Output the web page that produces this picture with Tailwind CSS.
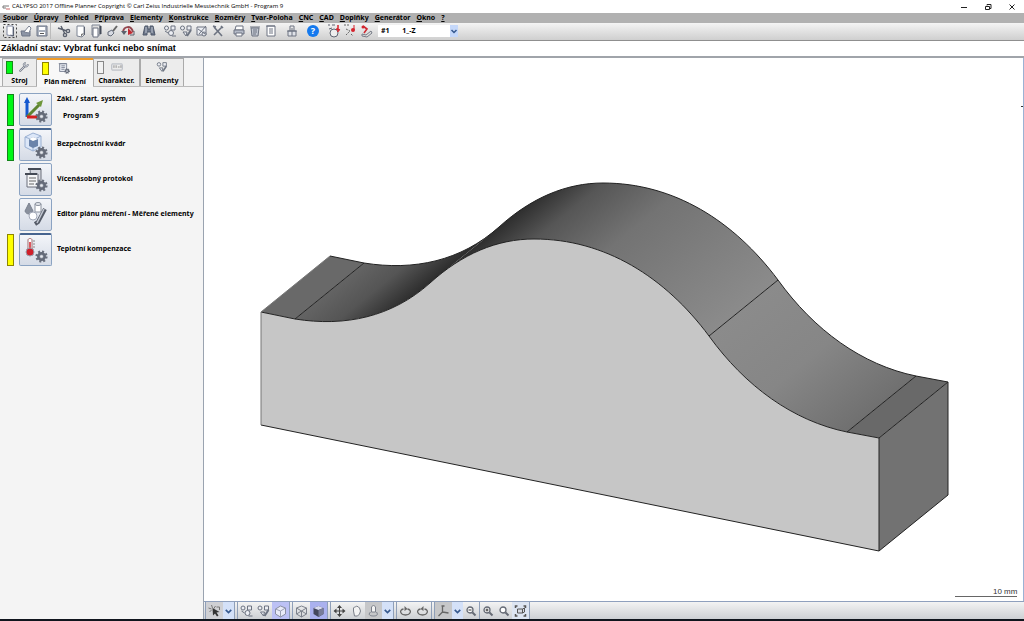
<!DOCTYPE html>
<html lang="cs">
<head>
    <meta charset="UTF-8">
    <title>CALYPSO 2017 Offline Planner</title>
    <script src="https://cdn.jsdelivr.net/npm/@tailwindcss/browser@4"></script>
</head>
<body class="bg-white">
    <!-- shared icons -->
    <svg class="hidden">
        <symbol id="gear" viewBox="0 0 16 16">
            <circle cx="8" cy="8" r="6" fill="none" stroke="#6a707d" stroke-width="3" stroke-dasharray="2.4 2.3"/>
            <circle cx="8" cy="8" r="4" fill="#9aa0ac" stroke="#646a78" stroke-width="3"/>
            <circle cx="8" cy="8" r="1.6" fill="#e8eaf0"/>
        </symbol>
        <symbol id="page" viewBox="0 0 16 16"><path d="M5 3h7v9l-2 2-5-1z" fill="#fff" stroke="#7d8493"/><path d="M12 10l-3 4v-3z" fill="#777"/><path d="M12.500 4v8" stroke="#5b6170"/></symbol>
        <symbol id="pages" viewBox="0 0 16 16"><path d="M4 2h8v10H4z" fill="#ddd" stroke="#7d8493"/><path d="M5 5h5v9H5z" fill="#fff" stroke="#6b7180"/><path d="M12.500 3v8" stroke="#444b59" stroke-width="2"/></symbol>
        <symbol id="new" viewBox="0 0 16 16"><path d="M1.500 1.500h13v13h-13z" fill="none" stroke="#444" stroke-dasharray="2 2"/><path d="M5 3h6v10l-6-1z" fill="#fff" stroke="#8188a0"/><path d="M11.500 4v9l-3-1" fill="none" stroke="#59606f"/></symbol>
        <symbol id="open" viewBox="0 0 16 16"><path d="M3 8h9v5H4z" fill="#8d95a6" stroke="#6c7486"/><path d="M6 9l5-6 2 2-2 5z" fill="#fff" stroke="#7a8192"/></symbol>
        <symbol id="save" viewBox="0 0 16 16"><path d="M3 3h10v10H3z" fill="#a9b0bd" stroke="#6c7486"/><path d="M5 4h6v3H5zM5 9h6v3H5z" fill="#fff"/><path d="M6 10.500h4" stroke="#555"/></symbol>
        <symbol id="cut" viewBox="0 0 16 16" fill="none" stroke="#5a606d" stroke-width="1.400"><path d="M2 5l9 3M5 3l4 8"/><circle cx="12" cy="8" r="1.600"/><circle cx="9" cy="12" r="1.600"/></symbol>
        <symbol id="brush" viewBox="0 0 16 16"><path d="M13 3L9 8" stroke="#666" stroke-width="2"/><path d="M4 9l4-2 2 3-3 3-3-1z" fill="#d8dbe3" stroke="#666d7b"/></symbol>
        <symbol id="undo" viewBox="0 0 16 16"><path d="M3 9c1-6 8-7 10 0" fill="none" stroke="#93474f" stroke-width="2"/><path d="M1 8h6l-3 4z" fill="#5c616c"/><path d="M8 5v7l5-2z" fill="#c22a32"/><path d="M10 12h4V8" fill="none" stroke="#5c616c"/></symbol>
        <symbol id="find" viewBox="0 0 16 16"><path d="M4 3h3v3h2V3h3l2 9h-4V9H6v3H2z" fill="#6c7689" stroke="#4f586a"/><path d="M5 4v6M11 4v6" stroke="#c1c7d3"/></symbol>
        <symbol id="feat1" viewBox="0 0 16 16" fill="#eceef3" stroke="#6c7381"><circle cx="4.500" cy="5" r="2"/><path d="M9 3h4v4H9z"/><circle cx="9" cy="10" r="2.500"/><path d="M10 13h4M3 8l3 2" fill="none"/></symbol>
        <symbol id="feat2" viewBox="0 0 16 16" fill="#eceef3" stroke="#6c7381"><circle cx="4.500" cy="5" r="2"/><path d="M9 3h4v4H9zM5 9h4l-1 4z"/><path d="M13 7l-4 6" stroke-width="2"/></symbol>
        <symbol id="feat3" viewBox="0 0 16 16" fill="#eceef3" stroke="#6c7381"><path d="M3 4h9v8H3z"/><circle cx="10" cy="11" r="2"/><path d="M4 6l7 5M12 3l-7 8" fill="none"/></symbol>
        <symbol id="tools" viewBox="0 0 16 16" fill="none" stroke="#6c7381" stroke-width="1.600"><path d="M4 4l8 9M12 4l-8 8M3 3l3 1M11 3l2 2"/></symbol>
        <symbol id="print" viewBox="0 0 16 16" stroke="#6c7381"><path d="M5 3h7v4H4z" fill="#fff"/><path d="M3 7h10v4H3z" fill="#b4bac7"/><path d="M5 10h6v3H5z" fill="#fff"/></symbol>
        <symbol id="trash" viewBox="0 0 16 16" stroke="#6c7381"><path d="M4 5h8l-1 8H5z" fill="#c3c8d2"/><path d="M3 4h10M6 7h4M6 9h4M6 11h3" fill="none"/></symbol>
        <symbol id="list" viewBox="0 0 16 16" stroke="#6c7381"><path d="M4 3h8v10H4z" fill="#fff"/><path d="M3 3h9M6 6h4M6 8h4M6 10h4" fill="none"/></symbol>
        <symbol id="lock" viewBox="0 0 16 16" stroke="#6c7381"><path d="M4 8h8v5H4z" fill="#dfe2e8"/><path d="M6 8V3h4v5M8 5v8M3 8h10" fill="none"/></symbol>
        <symbol id="hand" viewBox="0 0 16 16"><path d="M5 8V5l1-1 1 0 1-1 2 1 1 1 1 3-1 3-2 2H6z" fill="#f3f3f3" stroke="#7a7f89"/></symbol>
        <symbol id="turn" viewBox="0 0 16 16"><path d="M6 9V4l2-2 2 2v5z" fill="#f3f3f3" stroke="#7a7f89"/><path d="M5 9c-3 3 0 4 3 4s5-1 3-4" fill="none" stroke="#7a7f89"/></symbol>
        <symbol id="probe" viewBox="0 0 16 16" fill="none" stroke="#5f6572"><path d="M2 2h2M6 2h3M3 6l3-1"/><circle cx="8" cy="10" r="4" fill="#eee"/><path d="M12 2v7M10 6l4 1" stroke="#d5232d" stroke-width="1.500"/></symbol>
        <symbol id="probe2" viewBox="0 0 16 16" fill="none" stroke="#666"><path d="M2 2h2M5 2h2M4 6l4 2M4 12l4-4M9 11l2 2" stroke-dasharray="2 1"/><circle cx="11" cy="7" r="2" fill="#d5232d" stroke="none"/><path d="M12 2v5" stroke="#d5232d"/></symbol>
        <symbol id="probe3" viewBox="0 0 16 16"><path d="M5 3l4 3-3 4" fill="none" stroke="#cf2932" stroke-width="1.600"/><circle cx="5" cy="4" r="1.500" fill="#d5232d"/><path d="M4 11l4 1 5-4 1 2-5 4-5-1z" fill="#ddd" stroke="#777c87"/></symbol>
        <symbol id="cube" viewBox="0 0 16 16" stroke-linejoin="round"><path d="M3 6l5-3 5 2v6l-5 3-5-3z" fill="#e9ebf8" stroke="#8a8fa3"/><path d="M3 6l5 2 5-3M8 8v6" fill="none" stroke="#9a9fb3"/></symbol>
        <symbol id="wire" viewBox="0 0 16 16" fill="none" stroke="#7d828c" stroke-linejoin="round"><path d="M3 5l5-2 5 2v6l-5 3-5-3zM3 5l5 3 5-3M8 8v6M3 11l5-3 5 3"/></symbol>
        <symbol id="solid" viewBox="0 0 16 16"><path d="M3 5l5-2 5 2v6l-5 3-5-3z" fill="#43475d"/><path d="M3 5l5-2 5 2-5 2z" fill="#d9dcf0"/><path d="M8 7l5-2v6l-5 3z" fill="#777c99"/></symbol>
        <symbol id="move" viewBox="0 0 16 16"><path d="M8 4v8M4 8h8" stroke="#444"/><path d="M8 2l2.500 3h-5zM8 14l2.500-3h-5zM2 8l3-2.500v5zM14 8l-3-2.500v5z" fill="#444"/></symbol>
        <symbol id="rotate" viewBox="0 0 16 16"><path d="M6 6c-5 1-3 6 2 6s7-5 2-6" fill="none" stroke="#666" stroke-width="1.300"/><path d="M7 3l3 3-3 2z" fill="#666"/></symbol>
        <symbol id="axes" viewBox="0 0 16 16" fill="none" stroke="#666" stroke-width="1.300"><path d="M7 3v6l-4 4M7 9l6 1M6 3h3"/></symbol>
        <symbol id="zoom" viewBox="0 0 16 16"><circle cx="7" cy="7" r="3" fill="#fff" stroke="#666b75" stroke-width="1.300"/><path d="M9.500 9.500l3 3" stroke="#666b75" stroke-width="2"/></symbol>
        <symbol id="fit" viewBox="0 0 16 16" fill="none" stroke="#555"><path d="M3 5V3h2M11 3h2v2M13 11v2h-2M5 13H3v-2" stroke-width="1.500"/><path d="M5 6h5v4H5zM10 6l2-1v4l-2 1" fill="#d6dae3"/></symbol>
        <symbol id="arrow" viewBox="0 0 16 16"><path d="M6 5l7 4-3 .5 2 3-1.500 1-2-3-2 2z" fill="#333"/><path d="M2 5l3 1M3 9l2-2M5 2l1 3M9 3l-2 3M10 4h3v3" fill="none" stroke="#777"/></symbol>
        <symbol id="down" viewBox="0 0 10 10"><path d="M2.500 4L5 6.500 7.500 4" fill="none" stroke="#36598f" stroke-width="1.500"/></symbol>
        <symbol id="wrench" viewBox="0 0 16 16"><path d="M3 13l6-6" stroke="#7a808c" stroke-width="3" stroke-linecap="round"/><path d="M3 13l6-6" stroke="#e5e7ec" stroke-linecap="round"/><path d="M13 4l-2 2-2-1 1-3c-3 0-4 3-2 5s6 1 6-2z" fill="#c9cdd6" stroke="#7a808c"/></symbol>
        <symbol id="plan" viewBox="0 0 16 16"><path d="M3 3h8v9H3z" fill="#e6e9f0" stroke="#7a8294"/><path d="M2 3h9M5 5.500h4M5 7.500h4M5 9.500h3" stroke="#7a8294"/><use href="#gear" x="8" y="8" width="7" height="7"/></symbol>
        <symbol id="ruler" viewBox="0 0 16 16"><path d="M2 4.500h12M2 11.500h12M2 5v6M14 5v6" stroke="#aaafb9"/><path d="M4.500 6v3M7 6v3M9 8h2M12.500 6v3" stroke="#888" fill="none"/></symbol>
    </svg>

    <div class="flex h-screen flex-col overflow-hidden font-['Noto_Sans',sans-serif] text-[7px] font-bold text-black">
        <!-- title bar -->
        <header class="flex h-[13px] shrink-0 items-center pr-2 pl-[2px] font-['Open_Sans',sans-serif] text-[6px] font-normal">
            <svg class="mr-[2px] h-2 w-2" viewBox="0 0 8 8" fill="none"><path d="M1 3h6M1 3v2h3" stroke="#777"/><path d="M4 6h4" stroke="#c66"/></svg>
            <h1>CALYPSO 2017 Offline Planner Copyright © Carl Zeiss Industrielle Messtechnik GmbH - Program 9</h1>
            <div class="ml-auto flex items-center gap-4">
                <button aria-label="Minimalizovat"><svg class="h-2 w-2" viewBox="0 0 8 8"><path d="M1 4.500h6" stroke="#222"/></svg></button>
                <button aria-label="Obnovit"><svg class="h-2 w-2" viewBox="0 0 8 8" fill="none" stroke="#222"><path d="M1.500 3.500h4v3h-4zM3 2.500v-1h4v4H6"/></svg></button>
                <button aria-label="Zavřít"><svg class="h-2 w-2" viewBox="0 0 8 8"><path d="M1.500 1.500l5 5M6.500 1.500l-5 5" stroke="#222"/></svg></button>
            </div>
        </header>

        <nav class="flex h-[10px] shrink-0 items-center gap-[6px] bg-[#b1b1b1] pl-[3px]">
            <button><u>S</u>oubor</button>
            <button><u>Ú</u>pravy</button>
            <button><u>P</u>ohled</button>
            <button>P<u>ř</u>íprava</button>
            <button><u>E</u>lementy</button>
            <button><u>K</u>onstrukce</button>
            <button><u>R</u>ozměry</button>
            <button><u>T</u>var-Poloha</button>
            <button><u>C</u>NC</button>
            <button><u>C</u>AD</button>
            <button><u>D</u>oplňky</button>
            <button><u>G</u>enerátor</button>
            <button><u>O</u>kno</button>
            <button><u>?</u></button>
        </nav>

        <!-- main toolbar -->
        <div class="flex h-[18px] shrink-0 items-start gap-[5px] border-b border-[#8f8f8f] bg-linear-to-b from-[#f4f4f4] to-[#cfcfcf] pl-[2px]">
            <div class="flex border-r border-[#bbb]">
                <button aria-label="Nový"><svg class="size-4"><use href="#new"/></svg></button>
                <button aria-label="Otevřít"><svg class="size-4"><use href="#open"/></svg></button>
                <button aria-label="Uložit"><svg class="size-4"><use href="#save"/></svg></button>
            </div>
            <div class="flex">
                <button aria-label="Vyjmout"><svg class="size-4"><use href="#cut"/></svg></button>
                <button aria-label="Kopírovat"><svg class="size-4"><use href="#page"/></svg></button>
                <button aria-label="Vložit"><svg class="size-4"><use href="#pages"/></svg></button>
                <button aria-label="Formát"><svg class="size-4"><use href="#brush"/></svg></button>
                <button aria-label="Zpět"><svg class="size-4"><use href="#undo"/></svg></button>
            </div>
            <button aria-label="Hledat"><svg class="size-4"><use href="#find"/></svg></button>
            <div class="flex">
                <button aria-label="Elementy"><svg class="size-4"><use href="#feat1"/></svg></button>
                <button aria-label="Konstrukce"><svg class="size-4"><use href="#feat2"/></svg></button>
                <button aria-label="Charakteristiky"><svg class="size-4"><use href="#feat3"/></svg></button>
                <button aria-label="Nástroje"><svg class="size-4"><use href="#tools"/></svg></button>
            </div>
            <div class="flex">
                <button aria-label="Tisk"><svg class="size-4"><use href="#print"/></svg></button>
                <button aria-label="Smazat"><svg class="size-4"><use href="#trash"/></svg></button>
                <button aria-label="Protokol"><svg class="size-4"><use href="#list"/></svg></button>
            </div>
            <button aria-label="Zámek"><svg class="size-4"><use href="#lock"/></svg></button>
            <button class="flex size-4 items-center justify-center" aria-label="Nápověda"><span class="size-3 rounded-full bg-[#1479ee] text-center text-[9px] leading-3 text-white">?</span></button>
            <div class="flex">
                <button aria-label="Snímač"><svg class="size-4"><use href="#probe"/></svg></button>
                <button aria-label="Dráha"><svg class="size-4"><use href="#probe2"/></svg></button>
                <button aria-label="Výměna snímače"><svg class="size-4"><use href="#probe3"/></svg></button>
                <label class="relative ml-1 flex h-3 w-20 self-center bg-white">
                    <select class="w-full appearance-none pl-[3px] text-[7px] leading-3" aria-label="Snímač">
                        <option>#1 &nbsp; &nbsp; &nbsp; 1_-Z</option>
                    </select>
                    <svg class="pointer-events-none absolute top-0 right-0 h-3 w-2 bg-[#c5d8fa]" viewBox="1 0 8 10"><use href="#down" width="10" height="10"/></svg>
                </label>
            </div>
        </div>

        <p class="h-[17px] shrink-0 border-b-2 border-[#a0a4aa] pl-px font-['Liberation_Sans',sans-serif] text-[9px] leading-[15px]">Základní stav: Vybrat funkci nebo snímat</p>

        <main class="flex min-h-0 flex-1">
            <aside class="flex w-[204px] shrink-0 flex-col border-r border-[#9aa3b0] bg-[#f4f4f4]">
                <div class="flex h-[29px] items-end border-b border-[#bbb] pl-[2px]" role="tablist">
                    <button class="h-7 w-[35px] border border-b-0 border-[#aaa] bg-[#ececec]" role="tab">
                        <span class="flex h-[15px] items-center gap-[5px] pl-[3px]"><i class="h-[13px] w-[7px] border border-[#178a17] bg-[#00f715]"></i><svg class="size-3"><use href="#wrench"/></svg></span>
                        <span class="block leading-[11px]">Stroj</span>
                    </button>
                    <button class="-mb-px h-[29px] w-14 border-t-2 border-[#ef9b28] bg-[#f8f8f8]" role="tab" aria-selected="true">
                        <span class="flex h-[15px] items-center gap-2 pl-[5px]"><i class="h-[13px] w-[7px] border border-[#8f8600] bg-[#ffff00]"></i><svg class="size-[14px]"><use href="#plan"/></svg></span>
                        <span class="block leading-[11px]">Plán měření</span>
                    </button>
                    <button class="h-7 w-[47px] border border-b-0 border-[#aaa] bg-[#ececec]" role="tab">
                        <span class="flex h-[15px] items-center gap-[6px] pl-[3px]"><i class="h-[13px] w-[7px] border border-[#888] bg-[#f2f2f2]"></i><svg class="size-[14px]"><use href="#ruler"/></svg></span>
                        <span class="block leading-[11px]">Charakter.</span>
                    </button>
                    <button class="h-7 w-11 border border-b-0 border-[#aaa] bg-[#ececec]" role="tab">
                        <span class="flex h-[15px] items-center justify-center"><svg class="size-[14px]"><use href="#feat2"/></svg></span>
                        <span class="block leading-[11px]">Elementy</span>
                    </button>
                </div>

                <ul class="flex flex-col gap-[2px] pt-[6px] pl-[7px]">
                    <li class="flex h-[33px] items-center">
                        <i class="mr-[5px] h-8 w-[7px] border border-[#13851a] bg-[#00f715]"></i>
                        <button class="size-[33px] rounded-[2px] border border-[#8ba3c2] bg-linear-to-b from-[#f3f5f9] to-[#d5dbe6]" aria-label="Základní systém">
                            <svg viewBox="0 0 31 31"><path d="M7 6v17" stroke="#1558cf" stroke-width="3"/><path d="M7 3l3 6H4z" fill="#1558cf"/><path d="M7 23L20 10" stroke="#5e8432" stroke-width="3"/><path d="M23 6l-2 7-5-4z" fill="#6d963b"/><path d="M7 23h10" stroke="#d42020" stroke-width="3"/><use href="#gear" x="15" y="16" width="13" height="13"/></svg>
                        </button>
                        <div class="ml-[5px] flex h-full flex-col justify-between pt-[2px] pb-[6px]"><p class="leading-2">Zákl. / start. systém</p><p class="pl-[6px] leading-2">Program 9</p></div>
                    </li>
                    <li class="flex h-[33px] items-center">
                        <i class="mr-[5px] h-8 w-[7px] border border-[#13851a] bg-[#00f715]"></i>
                        <button class="size-[33px] rounded-[2px] border border-t-2 border-[#8ba3c2] border-t-[#46648f] bg-linear-to-b from-[#f3f5f9] to-[#d5dbe6]" aria-label="Bezpečnostní kvádr">
                            <svg viewBox="0 0 31 31"><path d="M5 7l8-4 8 3v11l-8 4-8-4z" fill="#dce7f8" stroke="#9ab0d2"/><path d="M5 7l8 3 8-4M13 10v11" fill="none" stroke="#9ab0d2"/><path d="M9 9l4-2 5 2v7l-5 2-4-2z" fill="#6b84ab"/><path d="M9 9l4-2 5 2-5 2z" fill="#fff"/><use href="#gear" x="15" y="16" width="13" height="13"/></svg>
                        </button>
                        <p class="ml-[5px]">Bezpečnostní kvádr</p>
                    </li>
                    <li class="flex h-[33px] items-center pl-3">
                        <button class="size-[33px] rounded-[2px] border border-[#8ba3c2] bg-linear-to-b from-[#f3f5f9] to-[#d5dbe6]" aria-label="Vícenásobný protokol">
                            <svg viewBox="0 0 31 31"><path d="M10 5h11v14H11z" fill="#d4d7de" stroke="#6a6f7b"/><path d="M7 10h11v13H7z" fill="#f5f6f8" stroke="#6a6f7b"/><path d="M8 5h13M5 10h12" stroke="#444a55" stroke-width="2"/><path d="M9 14h7M9 17h7M9 20h5" stroke="#666"/><use href="#gear" x="15" y="15" width="13" height="13"/></svg>
                        </button>
                        <p class="ml-[5px]">Vícenásobný protokol</p>
                    </li>
                    <li class="flex h-[33px] items-center pl-3">
                        <button class="size-[33px] rounded-[2px] border border-[#8ba3c2] bg-linear-to-b from-[#f3f5f9] to-[#d5dbe6]" aria-label="Editor plánu měření">
                            <svg viewBox="0 0 31 31"><path d="M9 4l4 8c-1 4-7 4-8 0z" fill="#89909d" stroke="#7a818f"/><path d="M15 5h6v8h-6z" fill="#fff" stroke="#8a919e"/><ellipse cx="18" cy="5" rx="3" ry="1.500" fill="#e2e5eb" stroke="#8a919e"/><circle cx="13" cy="17" r="4" fill="#fff" stroke="#a3a9b8"/><path d="M25 10l-7 13-3 2" fill="none" stroke="#565c68" stroke-width="4"/><path d="M24 10l-7 14" stroke="#c2c7d2" stroke-width="1.500"/></svg>
                        </button>
                        <p class="ml-[5px]">Editor plánu měření - Měřené elementy</p>
                    </li>
                    <li class="flex h-[33px] items-center">
                        <i class="mr-[5px] h-8 w-[7px] border border-[#8f8600] bg-[#ffff00]"></i>
                        <button class="size-[33px] rounded-[2px] border border-t-2 border-[#8ba3c2] border-t-[#46648f] bg-linear-to-b from-[#f3f5f9] to-[#d5dbe6]" aria-label="Teplotní kompenzace">
                            <svg viewBox="0 0 31 31"><path d="M8 5c0-2 4-2 4 0v9H8z" fill="#fff" stroke="#a06c70"/><path d="M10 7v10" stroke="#d01f2a" stroke-width="1.500"/><circle cx="10" cy="17" r="4" fill="#d01f2a" stroke="#9aa0ac"/><path d="M13 6h2M13 9h2M13 12h2" stroke="#888"/><use href="#gear" x="15" y="15" width="13" height="13"/></svg>
                        </button>
                        <p class="ml-[5px]">Teplotní kompenzace</p>
                    </li>
                </ul>
            </aside>

            <section class="flex min-w-0 flex-1 flex-col">
                <!-- CAD view -->
                <div class="min-h-0 flex-1 border-r border-[#9bb2d4]">
                    <svg class="h-full w-full" viewBox="204 58 819 543" aria-label="CAD model">
                        <defs>
                            <linearGradient id="valley" gradientUnits="userSpaceOnUse" x1="295" y1="319" x2="331" y2="363"><stop stop-color="#646464"/><stop offset=".5" stop-color="#555"/><stop offset="1" stop-color="#2e2e2e"/></linearGradient>
                            <linearGradient id="hump" gradientUnits="userSpaceOnUse" x1="430" y1="283" x2="567" y2="451"><stop stop-color="#2e2e2e"/><stop offset=".15" stop-color="#565656"/><stop offset=".4" stop-color="#737373"/><stop offset="1" stop-color="#8b8b8b"/></linearGradient>
                            <linearGradient id="slope" gradientUnits="userSpaceOnUse" x1="709" y1="336" x2="811" y2="461"><stop stop-color="#8b8b8b"/><stop offset=".5" stop-color="#868686"/><stop offset="1" stop-color="#707070"/></linearGradient>
                        </defs>
                        <path d="M261 312L295 319L364 263L330 256z" fill="#696969"/>
                        <path d="M295 319C345 327 392 317 430 283L499 227C461 261 414 271 364 263z" fill="url(#valley)"/>
                        <path d="M430 283C462 254 497 239 534 239C605 239 665 277 709 336L778 280C734 221 674 183 603 183C566 183 531 198 499 227z" fill="url(#hump)"/>
                        <path d="M709 336C745 386 793 421 847 432L916 376C862 365 814 330 778 280z" fill="url(#slope)"/>
                        <path d="M847 432L879 438L948 382L916 376z" fill="#696969"/>
                        <path d="M879 438L948 382V495L879 551z" fill="#727272"/>
                        <path d="M261 312L295 319C345 327 392 317 430 283C462 254 497 239 534 239C605 239 665 277 709 336C745 386 793 421 847 432L879 438V551L261 425z" fill="#c6c6c6"/>
                        <g fill="none" stroke="#222" stroke-width="1">
                            <path d="M261 312L295 319C345 327 392 317 430 283C462 254 497 239 534 239C605 239 665 277 709 336C745 386 793 421 847 432L879 438"/>
                            <path d="M330 256L364 263C414 271 461 261 499 227C531 198 566 183 603 183C674 183 734 221 778 280C814 330 862 365 916 376L948 382"/>
                            <path d="M295 319L364 263M709 336L778 280M847 432L916 376M879 438L948 382V495L879 551V438M261 425L879 551"/>
                            <path d="M261 425V312L330 256" stroke="#777"/>
                        </g>
                        <path d="M955 596.500h62" stroke="#666"/>
                        <text x="993" y="594" class="font-['Liberation_Sans',sans-serif] font-normal" font-size="8" fill="#333">10 mm</text>
                        <path d="M1021 106.500h2" stroke="#333"/>
                    </svg>
                </div>

                <!-- view toolbar -->
                <div class="flex h-[18px] shrink-0 items-center gap-[2px] border-t border-[#8fa0bd] bg-linear-to-b from-[#f3f3f3] to-[#cdd0d4] pl-px">
                    <div class="flex h-full border-x border-[#8f9fb8]">
                        <button class="bg-[#cfd0d4]" aria-label="Výběr"><svg class="h-4 w-[17px]"><use href="#arrow"/></svg></button>
                        <button class="bg-[#d4e1f8]" aria-label="Možnosti výběru"><svg class="h-3 w-[11px]"><use href="#down"/></svg></button>
                    </div>
                    <div class="flex h-full border-x border-[#8f9fb8]">
                        <button aria-label="Elementy"><svg class="h-4 w-[17px]"><use href="#feat1"/></svg></button>
                        <button aria-label="Označené elementy"><svg class="h-4 w-[17px]"><use href="#feat2"/></svg></button>
                        <button class="bg-[#bcc1f5]" aria-label="Model"><svg class="h-4 w-[17px]"><use href="#cube"/></svg></button>
                    </div>
                    <div class="flex h-full border-x border-[#8f9fb8]">
                        <button aria-label="Drátový model"><svg class="h-4 w-[17px]"><use href="#wire"/></svg></button>
                        <button class="bg-[#aab1ee]" aria-label="Stínovaný model"><svg class="h-4 w-[17px]"><use href="#solid"/></svg></button>
                    </div>
                    <div class="flex h-full border-x border-[#8f9fb8]">
                        <button aria-label="Posun"><svg class="h-4 w-[17px]"><use href="#move"/></svg></button>
                        <button aria-label="Ruka"><svg class="h-4 w-[17px]"><use href="#hand"/></svg></button>
                        <button class="bg-[#c6c7c9]" aria-label="Otáčení"><svg class="h-4 w-[17px]"><use href="#turn"/></svg></button>
                        <button class="bg-[#d4e1f8]" aria-label="Možnosti otáčení"><svg class="h-3 w-[11px]"><use href="#down"/></svg></button>
                    </div>
                    <div class="flex h-full border-x border-[#8f9fb8]">
                        <button aria-label="Otočit vlevo"><svg class="h-4 w-[17px]"><use href="#rotate"/></svg></button>
                        <button class="-scale-x-100" aria-label="Otočit vpravo"><svg class="h-4 w-[17px]"><use href="#rotate"/></svg></button>
                    </div>
                    <div class="flex h-full border-x border-[#8f9fb8]">
                        <button class="bg-[#c6c7c9]" aria-label="Osy"><svg class="h-4 w-[17px]"><use href="#axes"/></svg></button>
                        <button class="bg-[#d4e1f8]" aria-label="Možnosti os"><svg class="h-3 w-[11px]"><use href="#down"/></svg></button>
                        <button aria-label="Oddálit"><svg class="h-4 w-4" viewBox="0 0 16 16"><use href="#zoom"/><path d="M5.500 7h3" stroke="#333"/></svg></button>
                        <button class="border-l border-[#8f9fb8]" aria-label="Přiblížit"><svg class="h-4 w-4" viewBox="0 0 16 16"><use href="#zoom"/><path d="M5.500 7h3M7 5.500v3" stroke="#333"/></svg></button>
                        <button aria-label="Lupa"><svg class="h-4 w-4"><use href="#zoom"/></svg></button>
                        <button class="bg-[#dde5f2]" aria-label="Přizpůsobit"><svg class="h-4 w-[17px]"><use href="#fit"/></svg></button>
                    </div>
                </div>
            </section>
        </main>
        <div class="h-[2px] shrink-0 bg-[#10151d]"></div>
    </div>
</body>
</html>
